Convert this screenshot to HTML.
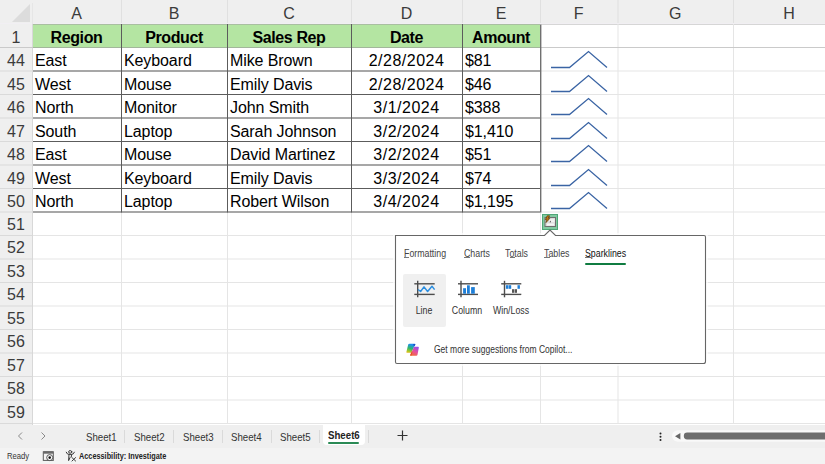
<!DOCTYPE html>
<html><head><meta charset="utf-8"><style>
*{margin:0;padding:0;box-sizing:border-box}
html,body{width:825px;height:464px;overflow:hidden;background:#fff;font-family:"Liberation Sans",sans-serif;position:relative}
.a{position:absolute}
.ch{position:absolute;top:0;height:24px;font-size:16px;color:#3b3b3b;text-align:center;line-height:28px}
.rh{position:absolute;left:0;width:32px;font-size:16px;color:#3b3b3b;text-align:center;height:24px;line-height:28px}
.c{position:absolute;font-size:16px;color:#000;white-space:nowrap;height:24px;line-height:28px}
.hd{font-weight:bold;text-align:center;letter-spacing:-0.4px}
.t{position:absolute;white-space:nowrap}
</style></head><body>

<div class="a" style="left:0;top:0;width:825px;height:24px;background:#efefef"></div>
<div class="a" style="left:0;top:24px;width:32px;height:401px;background:#efefef"></div>
<div class="a" style="left:32px;top:24px;width:508px;height:23px;background:#b4e5a2"></div>
<svg class="a" style="left:0;top:0" width="825" height="464">
<polygon points="12,22 30,22 30,4" fill="#dcdcdc"/>
<rect x="121" y="0" width="1" height="24" fill="#e0e0e0"/>
<rect x="227" y="0" width="1" height="24" fill="#e0e0e0"/>
<rect x="351" y="0" width="1" height="24" fill="#e0e0e0"/>
<rect x="462" y="0" width="1" height="24" fill="#e0e0e0"/>
<rect x="540" y="0" width="1" height="24" fill="#e0e0e0"/>
<rect x="617.5" y="0" width="1" height="24" fill="#e0e0e0"/>
<rect x="733" y="0" width="1" height="24" fill="#e0e0e0"/>
<rect x="0" y="23" width="825" height="1" fill="#f1eff3"/>
<rect x="32" y="24" width="793" height="1" fill="#d6d6d6"/>
<rect x="32" y="70.5" width="793" height="1" fill="#e5e5e5"/>
<rect x="0" y="70.5" width="32" height="1" fill="#dadada"/>
<rect x="32" y="94.0" width="793" height="1" fill="#e5e5e5"/>
<rect x="0" y="94.0" width="32" height="1" fill="#dadada"/>
<rect x="32" y="117.5" width="793" height="1" fill="#e5e5e5"/>
<rect x="0" y="117.5" width="32" height="1" fill="#dadada"/>
<rect x="32" y="141.0" width="793" height="1" fill="#e5e5e5"/>
<rect x="0" y="141.0" width="32" height="1" fill="#dadada"/>
<rect x="32" y="164.5" width="793" height="1" fill="#e5e5e5"/>
<rect x="0" y="164.5" width="32" height="1" fill="#dadada"/>
<rect x="32" y="188.0" width="793" height="1" fill="#e5e5e5"/>
<rect x="0" y="188.0" width="32" height="1" fill="#dadada"/>
<rect x="32" y="211.5" width="793" height="1" fill="#e5e5e5"/>
<rect x="0" y="211.5" width="32" height="1" fill="#dadada"/>
<rect x="32" y="235.0" width="793" height="1" fill="#e5e5e5"/>
<rect x="0" y="235.0" width="32" height="1" fill="#dadada"/>
<rect x="32" y="258.5" width="793" height="1" fill="#e5e5e5"/>
<rect x="0" y="258.5" width="32" height="1" fill="#dadada"/>
<rect x="32" y="282.0" width="793" height="1" fill="#e5e5e5"/>
<rect x="0" y="282.0" width="32" height="1" fill="#dadada"/>
<rect x="32" y="305.5" width="793" height="1" fill="#e5e5e5"/>
<rect x="0" y="305.5" width="32" height="1" fill="#dadada"/>
<rect x="32" y="329.0" width="793" height="1" fill="#e5e5e5"/>
<rect x="0" y="329.0" width="32" height="1" fill="#dadada"/>
<rect x="32" y="352.5" width="793" height="1" fill="#e5e5e5"/>
<rect x="0" y="352.5" width="32" height="1" fill="#dadada"/>
<rect x="32" y="376.0" width="793" height="1" fill="#e5e5e5"/>
<rect x="0" y="376.0" width="32" height="1" fill="#dadada"/>
<rect x="32" y="399.5" width="793" height="1" fill="#e5e5e5"/>
<rect x="0" y="399.5" width="32" height="1" fill="#dadada"/>
<rect x="32" y="423.0" width="793" height="1" fill="#e5e5e5"/>
<rect x="0" y="423.0" width="32" height="1" fill="#dadada"/>
<rect x="121" y="24" width="1" height="399" fill="#e5e5e5"/>
<rect x="227" y="24" width="1" height="399" fill="#e5e5e5"/>
<rect x="351" y="24" width="1" height="399" fill="#e5e5e5"/>
<rect x="462" y="24" width="1" height="399" fill="#e5e5e5"/>
<rect x="540" y="24" width="1" height="399" fill="#e5e5e5"/>
<rect x="617.5" y="24" width="1" height="399" fill="#e5e5e5"/>
<rect x="733" y="24" width="1" height="399" fill="#e5e5e5"/>
<rect x="32" y="24" width="1" height="401" fill="#d8d8d8"/>
<rect x="32" y="3" width="1" height="21" fill="#e6e6e6"/>
<rect x="0" y="47" width="825" height="1" fill="#cacaca"/>
<rect x="33" y="24" width="507" height="1" fill="#a9bfa0"/>
<rect x="33" y="47" width="507" height="1" fill="#a2b79b"/>
<rect x="121" y="24" width="1" height="188.5" fill="#5c5c5c"/>
<rect x="227" y="24" width="1" height="188.5" fill="#5c5c5c"/>
<rect x="351" y="24" width="1" height="188.5" fill="#5c5c5c"/>
<rect x="462" y="24" width="1" height="188.5" fill="#5c5c5c"/>
<rect x="540" y="24.5" width="1.4" height="188.0" fill="#707070"/>
<rect x="33" y="70.5" width="507" height="1" fill="#5c5c5c"/>
<rect x="33" y="94.0" width="507" height="1" fill="#5c5c5c"/>
<rect x="33" y="117.5" width="507" height="1" fill="#5c5c5c"/>
<rect x="33" y="141.0" width="507" height="1" fill="#5c5c5c"/>
<rect x="33" y="164.5" width="507" height="1" fill="#5c5c5c"/>
<rect x="33" y="188.0" width="507" height="1" fill="#5c5c5c"/>
<rect x="33" y="211.5" width="507" height="1" fill="#5c5c5c"/>
</svg>
<div class="ch" style="left:32px;width:89px">A</div>
<div class="ch" style="left:121px;width:106px">B</div>
<div class="ch" style="left:227px;width:124px">C</div>
<div class="ch" style="left:351px;width:111px">D</div>
<div class="ch" style="left:462px;width:78px">E</div>
<div class="ch" style="left:540px;width:77.5px">F</div>
<div class="ch" style="left:617.5px;width:115.5px">G</div>
<div class="ch" style="left:733px;width:112px">H</div>
<div class="rh" style="top:24px">1</div>
<div class="rh" style="top:47.0px">44</div>
<div class="rh" style="top:70.5px">45</div>
<div class="rh" style="top:94.0px">46</div>
<div class="rh" style="top:117.5px">47</div>
<div class="rh" style="top:141.0px">48</div>
<div class="rh" style="top:164.5px">49</div>
<div class="rh" style="top:188.0px">50</div>
<div class="rh" style="top:210.5px">51</div>
<div class="rh" style="top:234.0px">52</div>
<div class="rh" style="top:257.5px">53</div>
<div class="rh" style="top:281.0px">54</div>
<div class="rh" style="top:304.5px">55</div>
<div class="rh" style="top:328.0px">56</div>
<div class="rh" style="top:351.5px">57</div>
<div class="rh" style="top:375.0px">58</div>
<div class="rh" style="top:398.5px">59</div>
<div class="c hd" style="left:32px;top:24px;width:89px">Region</div>
<div class="c hd" style="left:121px;top:24px;width:106px">Product</div>
<div class="c hd" style="left:227px;top:24px;width:124px">Sales Rep</div>
<div class="c hd" style="left:351px;top:24px;width:111px">Date</div>
<div class="c hd" style="left:462px;top:24px;width:78px">Amount</div>
<div class="c" style="top:47.0px;left:35px;letter-spacing:-0.1px">East</div>
<div class="c" style="top:47.0px;left:124px;letter-spacing:-0.1px">Keyboard</div>
<div class="c" style="top:47.0px;left:230px;letter-spacing:-0.1px">Mike Brown</div>
<div class="c" style="top:47.0px;left:351px;width:111px;text-align:center;letter-spacing:0.5px">2/28/2024</div>
<div class="c" style="top:47.0px;left:465px;letter-spacing:-0.1px">$81</div>
<div class="c" style="top:70.5px;left:35px;letter-spacing:-0.1px">West</div>
<div class="c" style="top:70.5px;left:124px;letter-spacing:-0.1px">Mouse</div>
<div class="c" style="top:70.5px;left:230px;letter-spacing:-0.1px">Emily Davis</div>
<div class="c" style="top:70.5px;left:351px;width:111px;text-align:center;letter-spacing:0.5px">2/28/2024</div>
<div class="c" style="top:70.5px;left:465px;letter-spacing:-0.1px">$46</div>
<div class="c" style="top:94.0px;left:35px;letter-spacing:-0.1px">North</div>
<div class="c" style="top:94.0px;left:124px;letter-spacing:-0.1px">Monitor</div>
<div class="c" style="top:94.0px;left:230px;letter-spacing:-0.1px">John Smith</div>
<div class="c" style="top:94.0px;left:351px;width:111px;text-align:center;letter-spacing:0.5px">3/1/2024</div>
<div class="c" style="top:94.0px;left:465px;letter-spacing:-0.1px">$388</div>
<div class="c" style="top:117.5px;left:35px;letter-spacing:-0.1px">South</div>
<div class="c" style="top:117.5px;left:124px;letter-spacing:-0.1px">Laptop</div>
<div class="c" style="top:117.5px;left:230px;letter-spacing:-0.1px">Sarah Johnson</div>
<div class="c" style="top:117.5px;left:351px;width:111px;text-align:center;letter-spacing:0.5px">3/2/2024</div>
<div class="c" style="top:117.5px;left:465px;letter-spacing:-0.1px">$1,410</div>
<div class="c" style="top:141.0px;left:35px;letter-spacing:-0.1px">East</div>
<div class="c" style="top:141.0px;left:124px;letter-spacing:-0.1px">Mouse</div>
<div class="c" style="top:141.0px;left:230px;letter-spacing:-0.1px">David Martinez</div>
<div class="c" style="top:141.0px;left:351px;width:111px;text-align:center;letter-spacing:0.5px">3/2/2024</div>
<div class="c" style="top:141.0px;left:465px;letter-spacing:-0.1px">$51</div>
<div class="c" style="top:164.5px;left:35px;letter-spacing:-0.1px">West</div>
<div class="c" style="top:164.5px;left:124px;letter-spacing:-0.1px">Keyboard</div>
<div class="c" style="top:164.5px;left:230px;letter-spacing:-0.1px">Emily Davis</div>
<div class="c" style="top:164.5px;left:351px;width:111px;text-align:center;letter-spacing:0.5px">3/3/2024</div>
<div class="c" style="top:164.5px;left:465px;letter-spacing:-0.1px">$74</div>
<div class="c" style="top:188.0px;left:35px;letter-spacing:-0.1px">North</div>
<div class="c" style="top:188.0px;left:124px;letter-spacing:-0.1px">Laptop</div>
<div class="c" style="top:188.0px;left:230px;letter-spacing:-0.1px">Robert Wilson</div>
<div class="c" style="top:188.0px;left:351px;width:111px;text-align:center;letter-spacing:0.5px">3/4/2024</div>
<div class="c" style="top:188.0px;left:465px;letter-spacing:-0.1px">$1,195</div>
<svg class="a" style="left:540px;top:47.0px" width="77" height="24"><polyline points="11,20.5 29.5,20.5 48.5,4.5 67,20.5" fill="none" stroke="#3a64a4" stroke-width="1.3"/></svg>
<svg class="a" style="left:540px;top:70.5px" width="77" height="24"><polyline points="11,20.5 29.5,20.5 48.5,4.5 67,20.5" fill="none" stroke="#3a64a4" stroke-width="1.3"/></svg>
<svg class="a" style="left:540px;top:94.0px" width="77" height="24"><polyline points="11,20.5 29.5,20.5 48.5,4.5 67,20.5" fill="none" stroke="#3a64a4" stroke-width="1.3"/></svg>
<svg class="a" style="left:540px;top:117.5px" width="77" height="24"><polyline points="11,20.5 29.5,20.5 48.5,4.5 67,20.5" fill="none" stroke="#3a64a4" stroke-width="1.3"/></svg>
<svg class="a" style="left:540px;top:141.0px" width="77" height="24"><polyline points="11,20.5 29.5,20.5 48.5,4.5 67,20.5" fill="none" stroke="#3a64a4" stroke-width="1.3"/></svg>
<svg class="a" style="left:540px;top:164.5px" width="77" height="24"><polyline points="11,20.5 29.5,20.5 48.5,4.5 67,20.5" fill="none" stroke="#3a64a4" stroke-width="1.3"/></svg>
<svg class="a" style="left:540px;top:188.0px" width="77" height="24"><polyline points="11,20.5 29.5,20.5 48.5,4.5 67,20.5" fill="none" stroke="#3a64a4" stroke-width="1.3"/></svg>

<!-- quick analysis button -->
<svg class="a" style="left:541px;top:213px" width="18" height="18">
 <rect x="1.5" y="1.5" width="15" height="15" fill="#80c9a0" stroke="#4ea676" stroke-width="1"/>
 <rect x="4" y="4.5" width="10.5" height="9" fill="#dcdcdc" stroke="#6e6e6e" stroke-width="1"/>
 <rect x="6" y="10.5" width="7" height="2" fill="#f6f6f6"/>
 <rect x="8" y="6.2" width="5.5" height="3" fill="#f2f2f2"/>
 <path d="M9.3,7.5 L10,9.3 L8.6,9.3 Z" fill="#333"/>
 <path d="M6.2,2.8 L8.6,2.8 L7.2,5.4 L8.8,5.4 L5,9.6 L5.9,6.6 L4.4,6.6 Z" fill="#c07a12" stroke="#5c3600" stroke-width="0.7" stroke-linejoin="round"/>
</svg>
<!-- popup -->
<div class="a" style="left:393px;top:233px;width:315px;height:133px;background:#fff;opacity:0.7;border-radius:3px"></div>
<svg class="a" style="left:394px;top:229px" width="313" height="136">
 <path d="M1.5,6.5 H150.5 L156,1 L161.5,6.5 H310 Q311.5,6.5 311.5,8 V132.5 Q311.5,134.5 309.5,134.5 H3 Q1.5,134.5 1.5,133 Z" fill="#fff" stroke="#666" stroke-width="1.1"/>
</svg>

<div class="t" style="left:404px;top:248px;font-size:10px;line-height:12px;color:#444;transform:scaleX(0.88);transform-origin:0 0">Formatting</div>
<div class="t" style="left:464px;top:248px;font-size:10px;line-height:12px;color:#444;transform:scaleX(0.88);transform-origin:0 0">Charts</div>
<div class="t" style="left:505px;top:248px;font-size:10px;line-height:12px;color:#444;transform:scaleX(0.88);transform-origin:0 0">Totals</div>
<div class="t" style="left:544px;top:248px;font-size:10px;line-height:12px;color:#444;transform:scaleX(0.88);transform-origin:0 0">Tables</div>
<div class="t" style="left:585px;top:248px;font-size:10px;line-height:12px;color:#111;transform:scaleX(0.88);transform-origin:0 0">Sparklines</div>
<div class="a" style="left:585px;top:263px;width:41px;height:2px;background:#107c41;border-radius:1px"></div>
<div class="a" style="left:404px;top:257px;width:5px;height:1px;background:#777"></div>
<div class="a" style="left:464px;top:257px;width:6px;height:1px;background:#777"></div>
<div class="a" style="left:510px;top:257px;width:5px;height:1px;background:#777"></div>
<div class="a" style="left:544px;top:257px;width:6px;height:1px;background:#777"></div>
<div class="a" style="left:585px;top:257px;width:6px;height:1px;background:#777"></div>
<div class="a" style="left:403px;top:274px;width:43px;height:53px;background:#f0f0f0;border-radius:2px"></div>
<svg class="a" style="left:0;top:0" width="825" height="464">
 <g stroke="#4d4d4d" stroke-width="1.4" fill="none">
  <line x1="417.7" y1="280.8" x2="417.7" y2="297.3"/>
  <line x1="414.3" y1="283.8" x2="434.7" y2="283.8"/>
  <line x1="414.3" y1="294.4" x2="434.7" y2="294.4"/>
  <line x1="461" y1="280.8" x2="461" y2="297.3"/>
  <line x1="458" y1="283.8" x2="478" y2="283.8"/>
  <line x1="458" y1="294.4" x2="478" y2="294.4"/>
  <line x1="504.5" y1="280.8" x2="504.5" y2="297.3"/>
  <line x1="501.2" y1="283.8" x2="521.3" y2="283.8"/>
  <line x1="501.2" y1="294.4" x2="521.3" y2="294.4"/>
 </g>
 <polyline points="418,289.5 420.6,291.5 424,286.9 427.6,291.5 432,286.3 434.6,289.6" fill="none" stroke="#2b8ee0" stroke-width="1.5" stroke-linejoin="round"/>
 <g fill="#1f7fd8">
  <rect x="463.1" y="288.2" width="2.9" height="5.5"/>
  <rect x="467" y="285.3" width="2.8" height="8.4"/>
  <rect x="471.1" y="287.1" width="3.7" height="6.6"/>
  <rect x="505.9" y="285.2" width="2.4" height="3.6"/>
  <rect x="508.6" y="285.2" width="2.6" height="3.6"/>
  <rect x="517.5" y="285.2" width="2.4" height="3.6"/>
 </g>
 <g fill="#555">
  <rect x="512" y="289.2" width="2.1" height="3.6"/>
  <rect x="514.6" y="289.2" width="2.4" height="3.6"/>
 </g>
</svg>
<div class="t" style="left:384px;width:80px;top:305px;font-size:10px;line-height:12px;color:#333;text-align:center;transform:scaleX(0.88)">Line</div>
<div class="t" style="left:427px;width:80px;top:305px;font-size:10px;line-height:12px;color:#333;text-align:center;transform:scaleX(0.88)">Column</div>
<div class="t" style="left:471px;width:80px;top:305px;font-size:10px;line-height:12px;color:#333;text-align:center;transform:scaleX(0.88)">Win/Loss</div>
<svg class="a" style="left:404px;top:342px" width="17" height="16">
 <defs>
 <linearGradient id="g1" x1="0.3" y1="0" x2="0" y2="1"><stop offset="0" stop-color="#1f8ef0"/><stop offset="0.45" stop-color="#30b86a"/><stop offset="0.8" stop-color="#b8c820"/><stop offset="1" stop-color="#f0b020"/></linearGradient>
 <linearGradient id="g2" x1="0.7" y1="0" x2="0.2" y2="1"><stop offset="0" stop-color="#9a4ce8"/><stop offset="0.5" stop-color="#e8509a"/><stop offset="1" stop-color="#f07030"/></linearGradient>
 </defs>
 <path d="M4.2,2.5 Q4.5,1.8 5.5,1.8 H10.8 Q11.6,1.8 11.2,2.6 L7.3,10.8 H3.3 Q2.3,10.8 2.4,9.9 Z" fill="url(#g1)"/>
 <path d="M9.6,1.9 H10.9 Q11.7,1.9 11.3,2.7 L10.6,4.2 Q10,3 8.8,3.2 Z" fill="#1550c8"/>
 <path d="M10,4.8 H14.1 Q15.1,4.8 14.8,5.8 L13.5,12.8 Q13.3,13.8 12.3,13.8 H6.8 Q5.9,13.8 6.3,13 Z" fill="url(#g2)"/>
 <path d="M6.4,12.2 L7.9,9.2 Q8.6,10.2 8,11.5 L7.3,13.8 H6.8 Q5.9,13.8 6.3,13 Z" fill="#e84828"/>
</svg>
<div class="t" style="left:434px;top:344px;font-size:10px;line-height:12px;color:#333;transform:scaleX(0.85);transform-origin:0 0">Get more suggestions from Copilot...</div>
<div class="a" style="left:0;top:425px;width:825px;height:23px;background:#efefef"></div>
<div class="a" style="left:0;top:448px;width:825px;height:16px;background:#f3f3f3"></div>
<div class="a" style="left:33px;top:423.5px;width:792px;height:1.5px;background:#fff"></div>
<svg class="a" style="left:0;top:425px" width="60" height="23">
 <polyline points="22,7.5 18.5,11 22,14.5" fill="none" stroke="#8a8a8a" stroke-width="1"/>
 <polyline points="41.5,7.5 45,11 41.5,14.5" fill="none" stroke="#8a8a8a" stroke-width="1"/>
</svg>
<div class="t" style="left:86px;top:430px;font-size:11px;line-height:14px;color:#333;transform:scaleX(0.88);transform-origin:0 0">Sheet1</div>
<div class="t" style="left:134px;top:430px;font-size:11px;line-height:14px;color:#333;transform:scaleX(0.88);transform-origin:0 0">Sheet2</div>
<div class="t" style="left:183px;top:430px;font-size:11px;line-height:14px;color:#333;transform:scaleX(0.88);transform-origin:0 0">Sheet3</div>
<div class="t" style="left:231px;top:430px;font-size:11px;line-height:14px;color:#333;transform:scaleX(0.88);transform-origin:0 0">Sheet4</div>
<div class="t" style="left:280px;top:430px;font-size:11px;line-height:14px;color:#333;transform:scaleX(0.88);transform-origin:0 0">Sheet5</div>
<div class="a" style="left:124px;top:430px;width:1px;height:13px;background:#dadada"></div>
<div class="a" style="left:173px;top:430px;width:1px;height:13px;background:#dadada"></div>
<div class="a" style="left:222px;top:430px;width:1px;height:13px;background:#dadada"></div>
<div class="a" style="left:271px;top:430px;width:1px;height:13px;background:#dadada"></div>
<div class="a" style="left:319px;top:430px;width:1px;height:13px;background:#dadada"></div>
<div class="a" style="left:368px;top:430px;width:1px;height:13px;background:#dadada"></div>
<div class="a" style="left:323px;top:425px;width:42px;height:20px;background:#fff;border-radius:0 0 4px 4px"></div>
<div class="t" style="left:328px;top:428px;font-size:11px;line-height:14px;color:#222;font-weight:bold;transform:scaleX(0.88);transform-origin:0 0">Sheet6</div>
<div class="a" style="left:328px;top:442px;width:31px;height:1.7px;background:#2a8a55;border-radius:1px"></div>
<svg class="a" style="left:396px;top:429px" width="13" height="13"><path d="M6.5,1.5 V11.5 M1.5,6.5 H11.5" stroke="#333" stroke-width="1.2"/></svg>
<svg class="a" style="left:650px;top:425px" width="175" height="23">
 <circle cx="10.5" cy="8.6" r="1" fill="#222"/><circle cx="10.5" cy="11.7" r="1" fill="#222"/><circle cx="10.5" cy="14.9" r="1" fill="#222"/>
 <rect x="22" y="5.2" width="160" height="11.6" rx="5.8" fill="#f9f9f9"/>
 <polygon points="25,11.2 30.4,8.1 30.4,14.4" fill="#666"/>
 <rect x="33.8" y="7.6" width="160" height="6.8" rx="3.4" fill="#6e6e6e"/>
</svg>
<div class="t" style="left:7px;top:450px;font-size:8.5px;line-height:12px;color:#333;transform:scaleX(0.9);transform-origin:0 0">Ready</div>
<svg class="a" style="left:42px;top:450px" width="13" height="12">
 <rect x="1.3" y="1.8" width="10" height="8.6" fill="#f4f4f4" stroke="#5a5a5a" stroke-width="1"/>
 <rect x="1.3" y="1.3" width="10" height="2.4" fill="#6a6a6a"/>
 <circle cx="7.7" cy="7.6" r="3" fill="#fff" stroke="#444" stroke-width="0.9"/>
 <circle cx="7.7" cy="7.6" r="1.3" fill="#111"/>
</svg>
<svg class="a" style="left:64px;top:449px" width="14" height="14">
 <g fill="none" stroke="#3a3a3a" stroke-width="1" stroke-linecap="round" stroke-linejoin="round">
 <ellipse cx="6.2" cy="2.9" rx="1.6" ry="1.3"/>
 <path d="M2.2,3.2 Q3.2,5.6 5,5.4 H7.6 Q9.4,5.6 10.4,3.2"/>
 <path d="M5,5.6 L4.6,11.6 L6,8.6 M7.6,5.6 L7.2,8"/>
 <path d="M8,8.6 L11.6,12 M11.6,8.6 L8,12"/>
 </g>
</svg>
<div class="t" style="left:79px;top:450px;font-size:8.5px;line-height:12px;color:#222;font-weight:bold;transform:scaleX(0.86);transform-origin:0 0">Accessibility: Investigate</div>
</body></html>
